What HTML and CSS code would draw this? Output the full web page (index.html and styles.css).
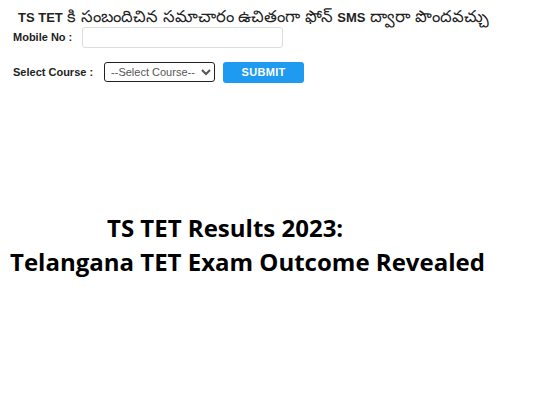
FILE: index.html
```html
<!DOCTYPE html>
<html>
<head>
<meta charset="utf-8">
<link rel="stylesheet" href="styles.css">
</head>
<body>
<div class="form">
  <div class="title"><b>TS TET</b> కి సంబందిచిన సమాచారం ఉచితంగా ఫోన్ <b>SMS</b> ద్వారా పొందవచ్చు</div>
  <div class="row row-mobile">
    <label class="lbl">Mobile No :</label>
    <input class="mobile" type="text">
  </div>
  <div class="row row-course">
    <label class="lbl">Select Course :</label>
    <select class="course"><option>--Select Course--</option></select>
    <button class="submit">SUBMIT</button>
  </div>
</div>
<div class="headline">
  <div class="h1">TS TET Results 2023:</div>
  <div class="h2">Telangana TET Exam Outcome Revealed</div>
</div>
</body>
</html>
```
FILE: styles.css
```css
html, body { margin: 0; padding: 0; background: #fff; }
body { width: 560px; height: 404px; overflow: hidden; font-family: "Liberation Sans", Arial, sans-serif; color: #111; }
.form { padding: 6px 0 0 13px; }
.title { margin-left: 5px; font-size: 16.5px; font-weight: normal; color: #222; line-height: 20px; height: 20px; white-space: nowrap; }
.title b { font-size: 13px; font-weight: bold; }
.row { display: flex; align-items: center; }
.row-mobile { margin-top: 0; height: 22px; }
.row-course { margin-top: 13px; height: 22px; }
.lbl { font-size: 11px; font-weight: bold; color: #222; }
.mobile { margin-left: 10px; width: 201px; height: 21px; box-sizing: border-box; border: 1px solid #ddd; border-radius: 3px; padding: 0; }
.course { margin-left: 11px; width: 111px; height: 20px; box-sizing: border-box; border: 1px solid #222; border-radius: 3px; font-family: "Liberation Sans", Arial, sans-serif; font-size: 11px; color: #555; background: #fff; padding: 0 2px; }
.submit { margin-left: 8px; width: 81px; height: 21px; box-sizing: border-box; border: 0; border-radius: 3px; background: #1e9af0; color: #fff; font-family: "Liberation Sans", Arial, sans-serif; font-size: 11px; font-weight: 900; letter-spacing: 0.3px; padding: 0; }
.headline { margin-top: 128px; font-family: "Open Sans", "Lato", sans-serif; font-weight: bold; color: #000; font-size: 24px; line-height: 34px; }
.h1 { padding-left: 107px; }
.h2 { padding-left: 10px; white-space: nowrap; }
```
